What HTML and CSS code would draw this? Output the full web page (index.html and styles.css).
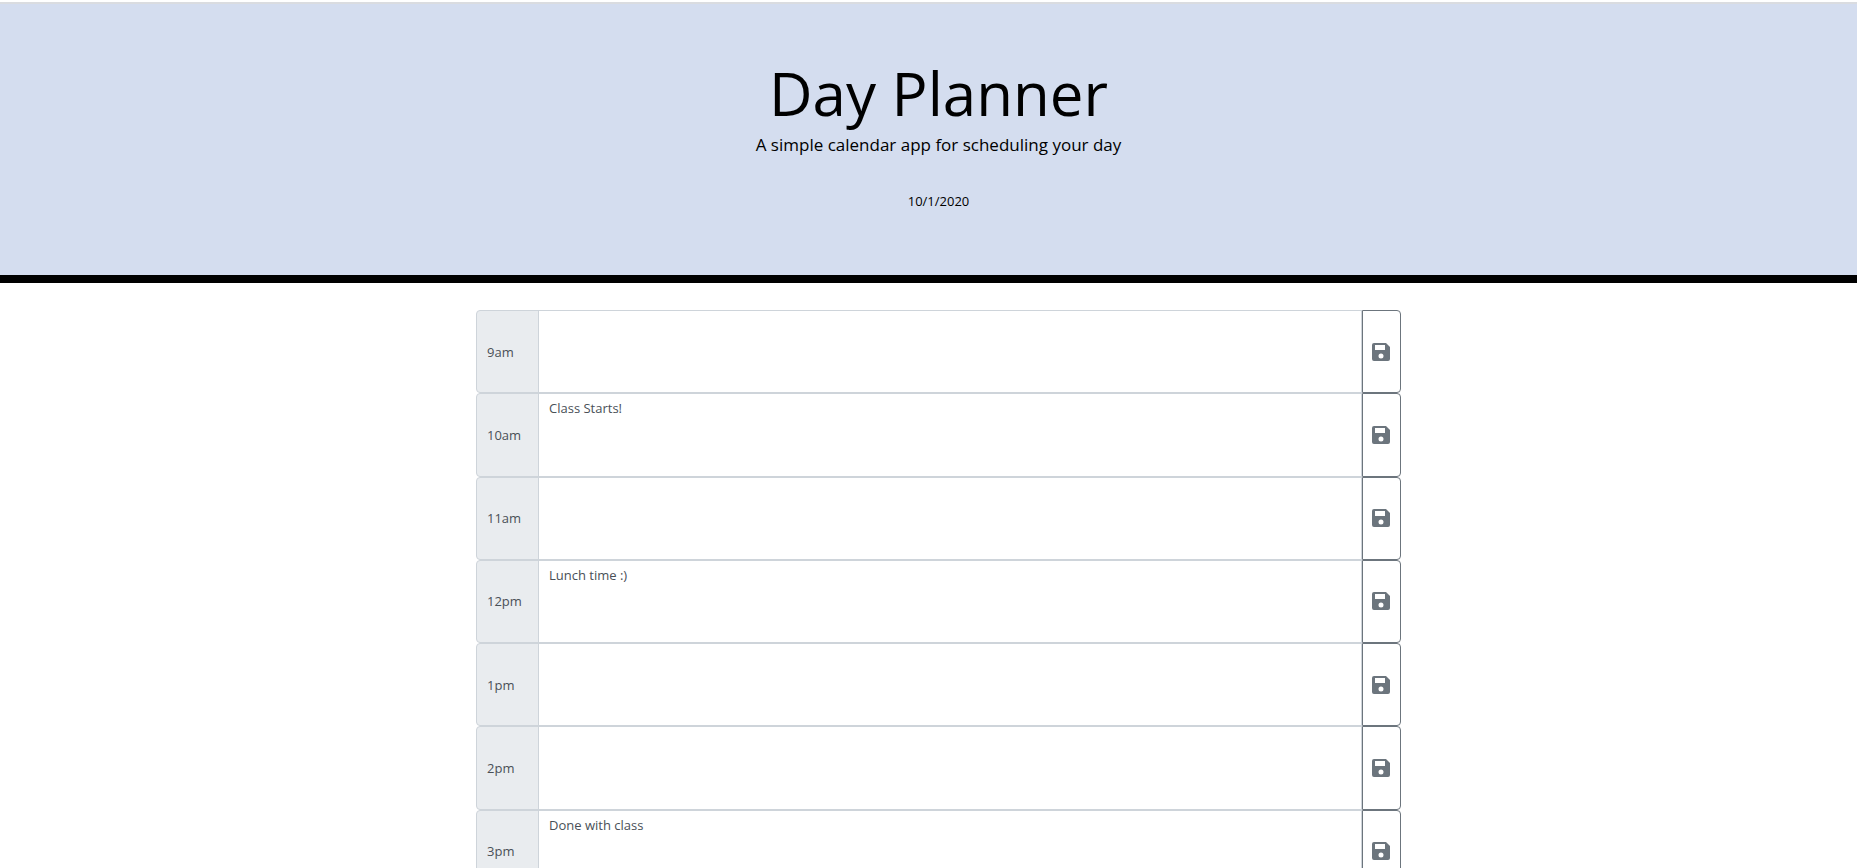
FILE: index.html
```html
<!DOCTYPE html>
<html lang="en">
<head>
  <meta charset="utf-8">
  <meta name="viewport" content="width=device-width, initial-scale=1">
  <title>Day Planner</title>
  <link rel="stylesheet" href="styles.css">
</head>
<body>
  <svg class="sprite" aria-hidden="true">
    <symbol id="save" viewBox="0 0 24 24">
      <path fill-rule="evenodd" d="M17 3H5a2 2 0 0 0-2 2v14a2 2 0 0 0 2 2h14a2 2 0 0 0 2-2V7l-4-4zM12 18.500a2.500 2.500 0 1 1 0-5 2.500 2.500 0 0 1 0 5zM16 10H6V5h10v5z"/>
    </symbol>
  </svg>
  <header class="banner">
    <h1 class="banner-title">Day Planner</h1>
    <p class="banner-lead">A simple calendar app for scheduling your day</p>
    <p class="banner-date">10/1/2020</p>
  </header>
  <main class="planner">
    <div class="schedule">
      <div class="block"><label class="hour" for="h9">9am</label><textarea class="entry" id="h9"></textarea><button class="save" type="button" aria-label="Save 9am"><svg class="icon"><use href="#save"/></svg></button></div>
      <div class="block"><label class="hour" for="h10">10am</label><textarea class="entry" id="h10">Class Starts!</textarea><button class="save" type="button" aria-label="Save 10am"><svg class="icon"><use href="#save"/></svg></button></div>
      <div class="block"><label class="hour" for="h11">11am</label><textarea class="entry" id="h11"></textarea><button class="save" type="button" aria-label="Save 11am"><svg class="icon"><use href="#save"/></svg></button></div>
      <div class="block"><label class="hour" for="h12">12pm</label><textarea class="entry" id="h12">Lunch time :)</textarea><button class="save" type="button" aria-label="Save 12pm"><svg class="icon"><use href="#save"/></svg></button></div>
      <div class="block"><label class="hour" for="h13">1pm</label><textarea class="entry" id="h13"></textarea><button class="save" type="button" aria-label="Save 1pm"><svg class="icon"><use href="#save"/></svg></button></div>
      <div class="block"><label class="hour" for="h14">2pm</label><textarea class="entry" id="h14"></textarea><button class="save" type="button" aria-label="Save 2pm"><svg class="icon"><use href="#save"/></svg></button></div>
      <div class="block"><label class="hour" for="h15">3pm</label><textarea class="entry" id="h15">Done with class</textarea><button class="save" type="button" aria-label="Save 3pm"><svg class="icon"><use href="#save"/></svg></button></div>
    </div>
  </main>
</body>
</html>
```
FILE: styles.css
```css
*,
*::before,
*::after {
  box-sizing: border-box;
}

body {
  margin: 0;
  padding-top: 2px;
  height: 100vh;
  overflow: hidden;
  background: #fff;
  color: #000;
  font-family: "Open Sans", sans-serif;
  font-size: 13px;
  line-height: 20px;
}

.sprite {
  display: none;
}

.banner {
  padding: 53px 26px 61px 46px;
  border-top: 2px solid #dadce0;
  border-bottom: 8px solid #000;
  background: #d4ddef;
  text-align: center;
}

.banner-title {
  margin: 0 0 4px;
  font-size: 60px;
  font-weight: 400;
  line-height: 72px;
}

.banner-lead {
  margin: 0 0 32px;
  font-size: 17px;
  line-height: 23px;
}

.banner-date {
  margin: 0;
  line-height: 26px;
}

.planner {
  padding: 27px 0 0 20px;
}

.schedule {
  display: grid;
  grid-auto-rows: 1fr;
  max-width: 925px;
  min-height: 583px;
  margin: 0 auto;
}

.block {
  display: flex;
}

.hour {
  display: flex;
  align-items: center;
  width: 63px;
  padding: 0 10px;
  border: 1px solid #ced4da;
  border-radius: 4px 0 0 4px;
  background: #e9ecef;
  color: #495057;
}

.entry {
  flex: 1;
  min-width: 0;
  margin-left: -1px;
  padding: 4px 10px;
  border: 1px solid #ced4da;
  border-radius: 0;
  outline: none;
  resize: none;
  background: #fff;
  color: #495057;
  font: inherit;
}

.save {
  display: flex;
  align-items: center;
  justify-content: center;
  width: 39px;
  padding: 0 1px 0 0;
  border: 1px solid #6c757d;
  border-radius: 0 4px 4px 0;
  background: transparent;
  color: #6c757d;
  cursor: pointer;
}

.icon {
  width: 24px;
  height: 24px;
  fill: currentColor;
}
```
